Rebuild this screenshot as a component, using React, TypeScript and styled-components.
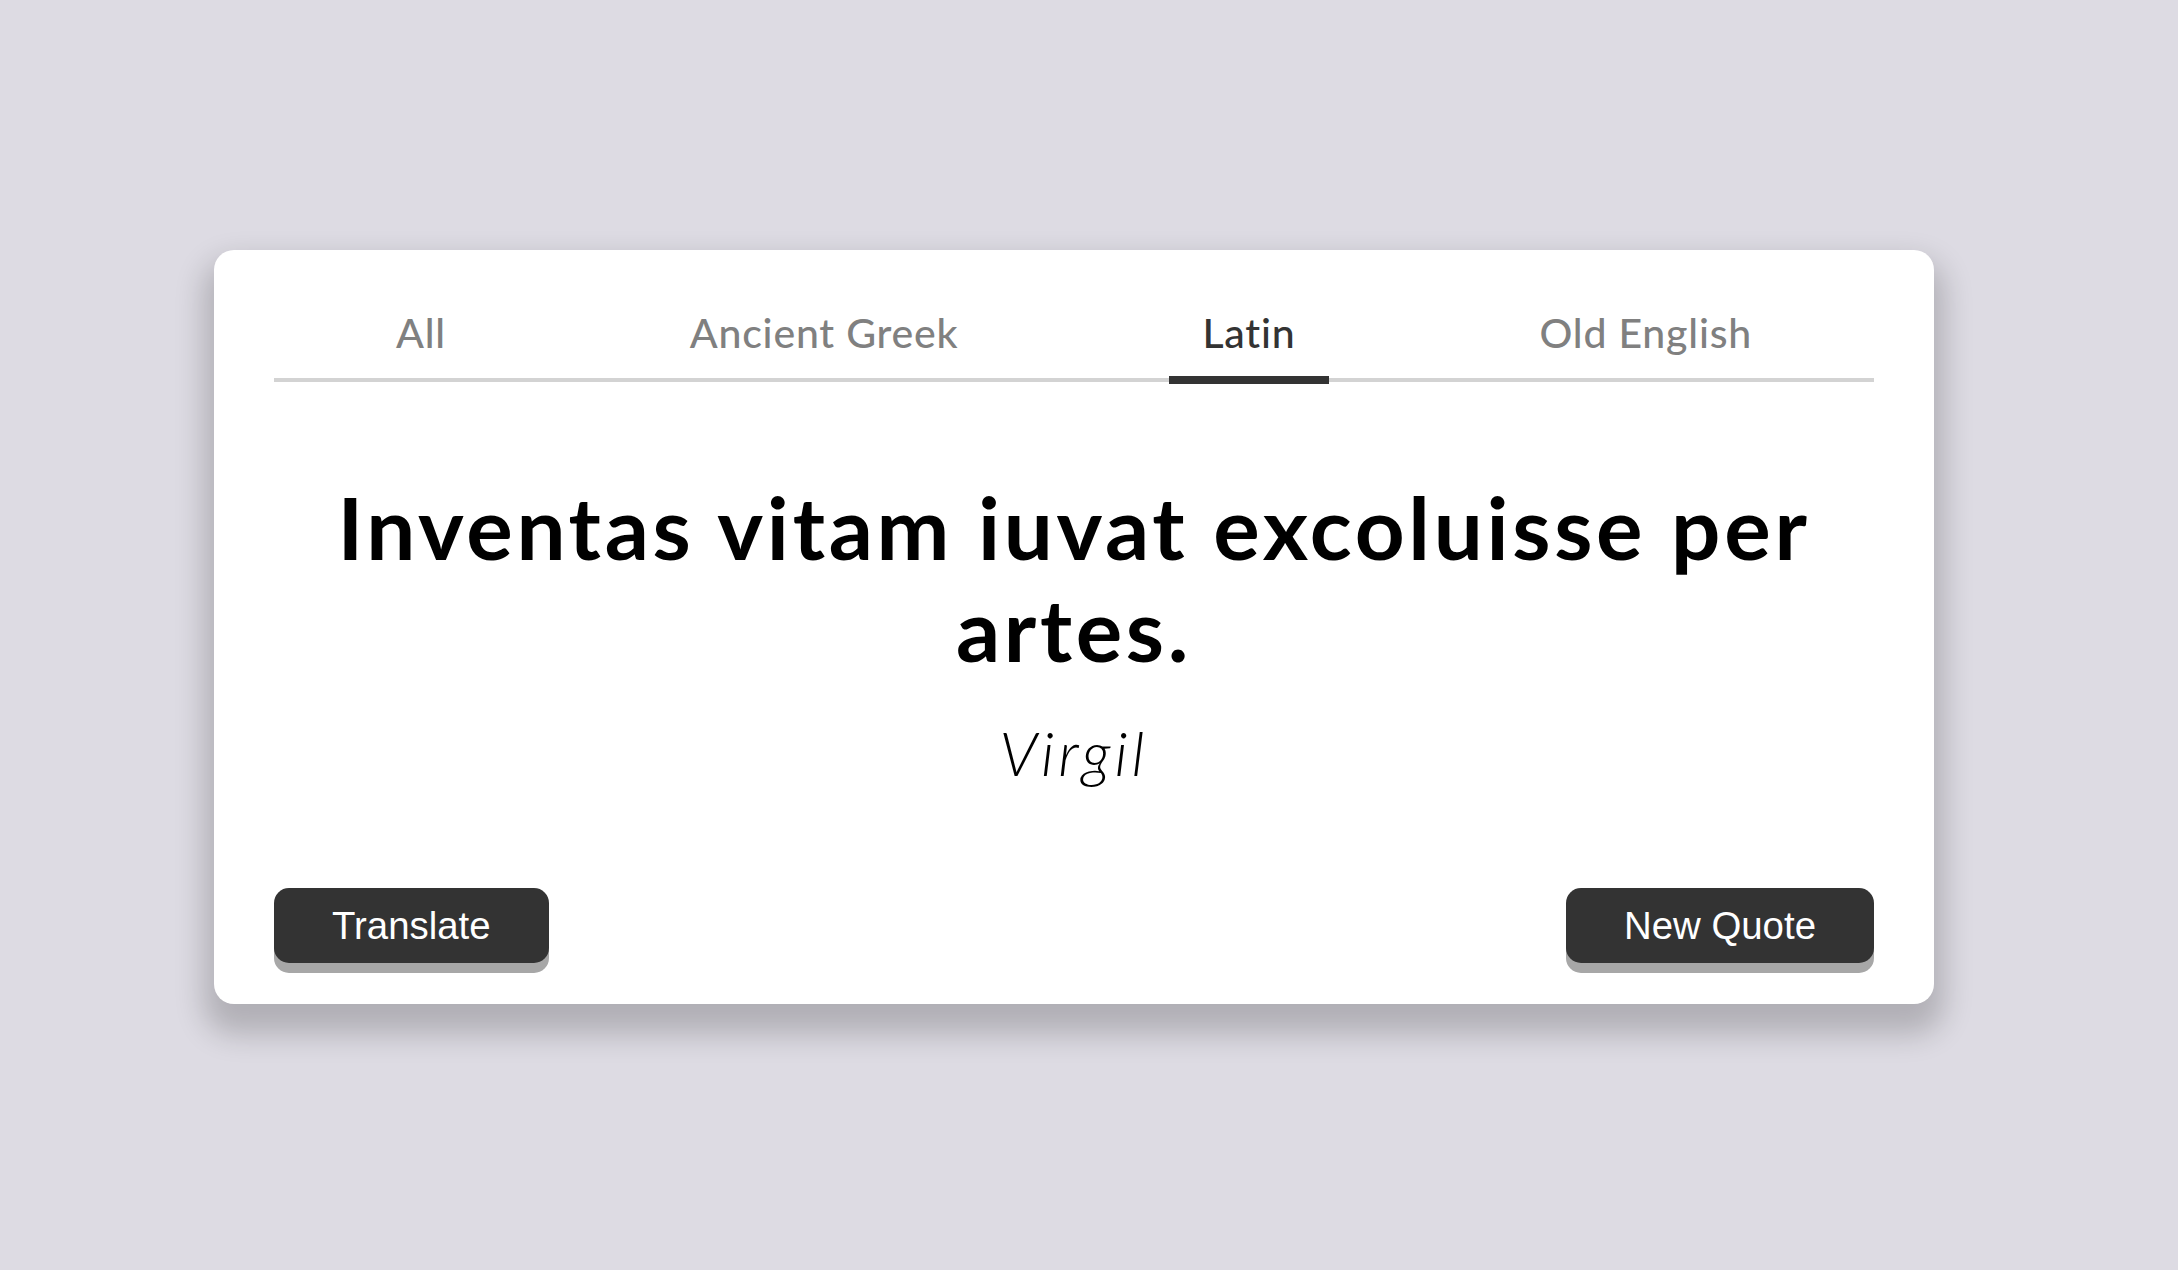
import styled, { createGlobalStyle } from "styled-components";
import { useState } from "react";

const GlobalStyle = createGlobalStyle`
  html, body {
    margin: 0;
    padding: 0;
    background: #dddbe3;
  }
  body {
    font-family: Lato, "Noto Sans", sans-serif;
  }
`;

const Page = styled.div`
  display: flex;
  min-height: 1270px;
  box-sizing: border-box;
  padding: 250px 244px 0 214px;
  align-items: flex-start;
`;

const Card = styled.div`
  flex: 1;
  background: #fff;
  border-radius: 20px;
  box-shadow: 0 20px 30px 10px rgba(0, 0, 0, 0.2);
  padding: 46px 60px 41px;
  display: flex;
  flex-direction: column;
`;

const TabBar = styled.div`
  display: flex;
  justify-content: space-around;
  border-bottom: 4px solid #d3d3d3;
`;

const Tab = styled.button<{ $active?: boolean }>`
  background: none;
  border: none;
  border-bottom: 8px solid ${(p) => (p.$active ? "#333" : "transparent")};
  margin-bottom: -6px;
  padding: 12px 33px 19px;
  font-family: Lato, sans-serif;
  font-weight: 500;
  font-size: 41px;
  line-height: 49px;
  letter-spacing: 0.8px;
  color: ${(p) => (p.$active ? "#333" : "#808080")};
  cursor: pointer;
`;

const Quote = styled.h1`
  margin: 94px 0 0;
  text-align: center;
  font-family: Lato, sans-serif;
  font-weight: 700;
  font-size: 87px;
  line-height: 102px;
  letter-spacing: 3.7px;
  color: #000;
`;

const Author = styled.p`
  margin: 35px 0 0;
  text-align: center;
  font-family: Lato, sans-serif;
  font-style: italic;
  font-weight: 300;
  font-size: 62px;
  line-height: 74px;
  letter-spacing: 4px;
  color: #000;
`;

const Actions = styled.div`
  display: flex;
  justify-content: space-between;
  margin-top: 99px;
`;

const ActionButton = styled.button`
  background: #333;
  color: #fff;
  border: none;
  border-radius: 15px;
  box-shadow: 0 10px 0 #a7a7a7;
  padding: 15px 58px;
  font-family: "Liberation Sans", Arial, sans-serif;
  font-size: 38.4px;
  line-height: 45px;
  cursor: pointer;
`;

const tabs = ["All", "Ancient Greek", "Latin", "Old English"];

const App = () => {
  const [activeTab, setActiveTab] = useState("Latin");

  return (
    <Page>
      <GlobalStyle />
      <Card>
        <TabBar>
          {tabs.map((t) => (
            <Tab key={t} $active={t === activeTab} onClick={() => setActiveTab(t)}>
              {t}
            </Tab>
          ))}
        </TabBar>

        <Quote>Inventas vitam iuvat excoluisse per artes.</Quote>
        <Author>Virgil</Author>

        <Actions>
          <ActionButton>Translate</ActionButton>
          <ActionButton>New Quote</ActionButton>
        </Actions>
      </Card>
    </Page>
  );
};

export default App;
